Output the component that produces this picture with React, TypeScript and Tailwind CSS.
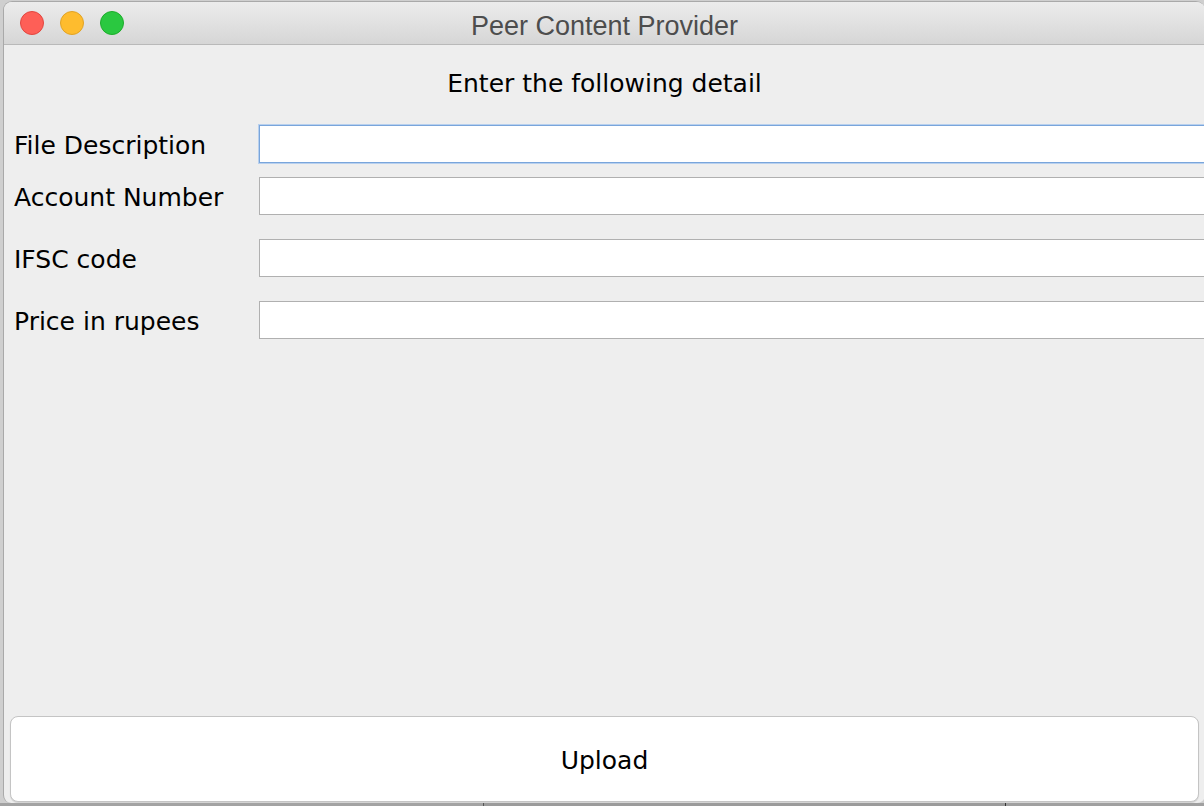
import React from "react";

const fields = [
  { label: "File Description", gap: "mt-[27px]", focused: true },
  { label: "Account Number", gap: "mt-[14px]", focused: false },
  { label: "IFSC code", gap: "mt-[24px]", focused: false },
  { label: "Price in rupees", gap: "mt-[24px]", focused: false },
];

const TrafficLights: React.FC = () => (
  <div className="flex items-center gap-[16px] pl-[16px]">
    <span className="h-[24px] w-[24px] rounded-full border border-[#e2463f] bg-[#fe5f57]" />
    <span className="h-[24px] w-[24px] rounded-full border border-[#e1a325] bg-[#febc2e]" />
    <span className="h-[24px] w-[24px] rounded-full border border-[#1dad2b] bg-[#2ac840]" />
  </div>
);

export default function App() {
  return (
    <div className="flex h-[806px] w-[1204px] flex-col overflow-hidden bg-[#cfcfcf] pl-[3px] pt-[1px]">
      <div className="flex w-[1202px] flex-1 flex-col overflow-hidden rounded-t-[9px] rounded-b-[8px] border-l border-t border-[#a9a9a9] bg-[#eeeeee]">
        {/* title bar */}
        <div className="relative flex h-[43px] items-center border-b border-[#b9b9b9] bg-gradient-to-b from-[#ececec] to-[#d6d6d6]">
          <TrafficLights />
          <div className="pointer-events-none absolute inset-0 flex items-center justify-center pt-[6px] font-['Liberation_Sans',sans-serif] text-[27px] leading-none text-[#4d4d4d]">
            Peer Content Provider
          </div>
        </div>

        {/* form */}
        <div className="flex flex-1 flex-col font-['DejaVu_Sans',sans-serif] text-[25px] text-black">
          <div className="mt-[23px] flex h-[30px] items-center justify-center leading-none">
            Enter the following detail
          </div>

          {fields.map((f) => (
            <div key={f.label} className={`${f.gap} flex h-[38px] items-center`}>
              <div className="w-[255px] pl-[10px] pt-[2px] leading-none">{f.label}</div>
              <div
                className={
                  f.focused
                    ? "h-full flex-1 border border-[#79a5db] bg-white shadow-[0_0_0_1px_#b8d0ee]"
                    : "h-full flex-1 border border-[#b0b0b0] bg-white"
                }
              />
            </div>
          ))}

          <button className="mx-[6px] mb-[1px] mt-auto flex h-[86px] items-center justify-center rounded-[8px] border border-[#c4c4c4] bg-white pt-[3px] leading-none text-black shadow-[0_1px_1px_rgba(0,0,0,0.12)]">
            Upload
          </button>
        </div>
      </div>

      {/* desktop behind the window */}
      <div className="ml-[-3px] flex h-[3px] bg-[#9b9b9b]">
        <div className="w-[484px] border-r border-[#555555] bg-[#a3a3a3]" />
        <div className="w-[522px] border-r border-[#333333]" />
        <div className="flex-1 bg-[#a0a0a0]" />
      </div>
    </div>
  );
}
